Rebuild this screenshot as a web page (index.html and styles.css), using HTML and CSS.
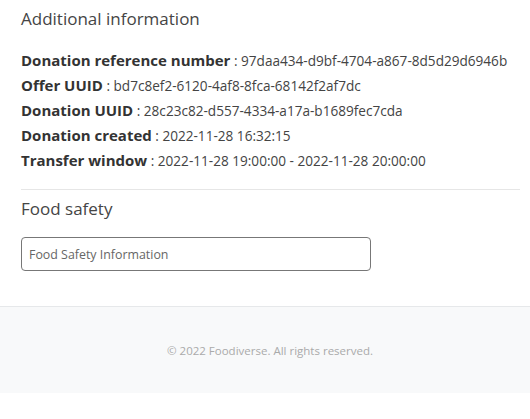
FILE: index.html
```html
<!DOCTYPE html>
<html lang="en">

<head>
    <meta charset="UTF-8">
    <meta name="viewport" content="width=device-width, initial-scale=1.0">
    <title>Donation</title>
    <link rel="stylesheet" href="styles.css">
</head>

<body>
    <main class="content">
        <section class="info">
            <h2>Additional information</h2>
            <ul class="details">
                <li><b>Donation reference number</b> : 97daa434-d9bf-4704-a867-8d5d29d6946b</li>
                <li><b>Offer UUID</b> : bd7c8ef2-6120-4af8-8fca-68142f2af7dc</li>
                <li><b>Donation UUID</b> : 28c23c82-d557-4334-a17a-b1689fec7cda</li>
                <li><b>Donation created</b> : 2022-11-28 16:32:15</li>
                <li><b>Transfer window</b> : 2022-11-28 19:00:00 - 2022-11-28 20:00:00</li>
            </ul>
        </section>
        <section class="safety">
            <h2>Food safety</h2>
            <input type="text" placeholder="Food Safety Information">
        </section>
    </main>
    <footer class="footer">
        <p>&copy; 2022 Foodiverse. All rights reserved.</p>
    </footer>
</body>

</html>
```

FILE: styles.css
```css
body {
    margin: 0;
    font-family: "Open Sans", sans-serif;
    color: #444;
    background: #fff;
}

.content {
    padding: 0 10px 0 21px;
}

h2 {
    margin: 0;
    font-size: 17px;
    line-height: 24px;
    font-weight: 400;
    color: #454545;
}

.info {
    padding: 7px 0 16px;
    border-bottom: 1px solid #e6e6e6;
}

.details {
    list-style: none;
    margin: 17px 0 0;
    padding: 0;
    font-size: 13.6px;
    line-height: 25px;
}

.details b {
    font-size: 15px;
    line-height: 25px;
    color: #333;
}

.safety {
    padding: 7px 0 35px;
}

.safety input {
    display: block;
    margin-top: 16px;
    width: 350px;
    height: 34px;
    box-sizing: border-box;
    padding: 0 7px;
    border: 1px solid #777;
    border-radius: 4px;
    font-family: inherit;
    font-size: 12.4px;
}

.safety input::placeholder {
    color: #666;
}

.footer {
    background: #f8f9fa;
    border-top: 1px solid #e6e8ea;
    height: 86px;
    padding-left: 10px;
    display: flex;
    align-items: center;
    justify-content: center;
}

.footer p {
    margin: 0;
    font-size: 11.5px;
    color: #aaa;
}
```
